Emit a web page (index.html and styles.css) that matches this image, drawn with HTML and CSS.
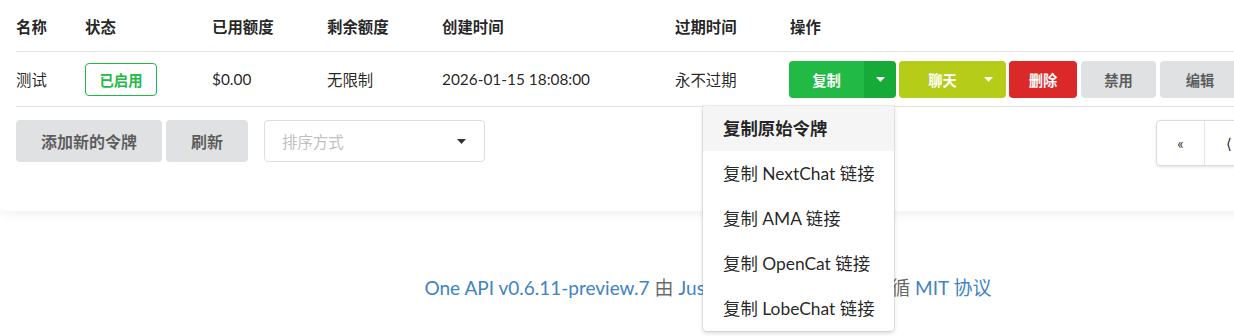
FILE: index.html
```html
<!DOCTYPE html>
<html>
<head>
<meta charset="utf-8">
<title>令牌</title>
<link rel="stylesheet" href="styles.css">
</head>
<body>
<div class="page">
	<div class="card">
		<table class="token-table">
			<colgroup>
				<col style="width:69px"><col style="width:127px"><col style="width:115px"><col style="width:115px"><col style="width:233px"><col style="width:115px"><col>
			</colgroup>
			<thead>
				<tr>
					<th>名称</th><th>状态</th><th>已用额度</th><th>剩余额度</th><th>创建时间</th><th>过期时间</th><th>操作</th>
				</tr>
			</thead>
			<tbody>
				<tr>
					<td>测试</td>
					<td><span class="label-green">已启用</span></td>
					<td>$0.00</td>
					<td>无限制</td>
					<td>2026-01-15 18:08:00</td>
					<td>永不过期</td>
					<td>
						<div class="actions">
							<div class="btn-group">
								<span class="btn btn-green btn-copy">复制</span>
								<span class="btn btn-green-dark btn-caret">
									<svg width="9" height="5" viewBox="0 0 9 5"><path d="M0 0h9L4.5 5z" fill="#fff"/></svg>
								</span>
							</div>
							<span class="btn btn-olive btn-chat">聊天
								<svg class="chat-caret" width="9" height="5" viewBox="0 0 9 5"><path d="M0 0h9L4.5 5z" fill="#fff"/></svg>
							</span>
							<span class="btn btn-red btn-del">删除</span>
							<span class="btn btn-grey btn-ban">禁用</span>
							<span class="btn btn-grey btn-edit">编辑</span>
						</div>
						<div class="copy-menu">
							<div class="copy-item active">复制原始令牌</div>
							<div class="copy-item">复制 NextChat 链接</div>
							<div class="copy-item">复制 AMA 链接</div>
							<div class="copy-item">复制 OpenCat 链接</div>
							<div class="copy-item">复制 LobeChat 链接</div>
						</div>
					</td>
				</tr>
			</tbody>
		</table>

		<div class="toolbar">
			<span class="btn btn-grey btn-big btn-add">添加新的令牌</span>
			<span class="btn btn-grey btn-big btn-refresh">刷新</span>
			<div class="sort-select">
				<span class="placeholder">排序方式</span>
				<svg width="9" height="5" viewBox="0 0 9 5"><path d="M0 0h9L4.5 5z" fill="#333"/></svg>
			</div>
			<div class="pager">
				<span class="pager-item">«</span>
				<span class="pager-item">⟨</span>
				<span class="pager-item active">1</span>
				<span class="pager-item">⟩</span>
				<span class="pager-item">»</span>
			</div>
		</div>
	</div>

	<div class="footer">
		<a href="#">One API v0.6.11-preview.7</a> 由 <a href="#">JustSong</a> 构建，源代码遵循 <a href="#">MIT 协议</a>
	</div>
</div>
</body>
</html>
```

FILE: styles.css
```css
html{overflow:hidden;}
html,body{margin:0;padding:0;background:#fff;}

body{
	font-family: Lato, "Noto Sans CJK SC", sans-serif;
	font-size: 15.4px;
	color: rgba(0,0,0,.87);
	min-height: 336px;
}

.page{width: 1416px;}

.card{
	background: #fff;
	border-radius: 0 0 5px 5px;
	box-shadow: 0 3px 12px rgba(0,0,0,.06);
	padding-bottom: 45px;
}

.token-table{
	width: calc(100% - 32px);
	margin: 0 16px;
	border-collapse: collapse;
	table-layout: fixed;
}
.token-table th{
	height: 51px;padding: 0;
	text-align: left;font-weight: 700;
	border-bottom: 1px solid #e3e3e3;
}
.token-table td{
	height: 54px;padding: 0;
	border-bottom: 1px solid #e3e3e3;
	position: relative;
}

.label-green{
	display: inline-flex;align-items: center;justify-content: center;
	width: 70px;height: 31px;
	border: 1px solid #21ba45;border-radius: 4px;
	color: #21ba45;font-weight: 700;font-size: 14.3px;
}

.actions{display: flex;gap: 3px;margin-left: -1px;}

.btn{
	display: inline-flex;align-items: center;justify-content: center;
	height: 37px;border-radius: 4px;
	font-size: 14.3px;font-weight: 700;
	color: #fff;box-sizing: border-box;
}
.btn-group{display: flex;}
.btn-copy{width: 75px;border-radius: 4px 0 0 4px;}
.btn-caret{width: 32px;border-radius: 0 4px 4px 0;}
.btn-green{background: #21ba45;}
.btn-green-dark{background: #16ab39;}
.btn-olive{background: #b5cc18;width: 107px;position: relative;padding-right: 20px;}
.chat-caret{position: absolute;right: 13px;top: 16px;}
.btn-red{background: #db2828;width: 68px;}
.btn-grey{background: #e0e1e2;color: rgba(0,0,0,.6);}
.btn-ban{width: 75px;margin-left: 1px;}
.btn-edit{width: 80px;margin-left: 1px;}

.copy-menu{
	position: absolute;left: -87px;top: 54px;z-index: 10;
	width: 191px;
	background: #fff;
	border-radius: 0 0 4px 4px;
	box-shadow: 0 2px 4px rgba(34,36,38,.18), 0 0 0 1px rgba(34,36,38,.08);
}
.copy-item{
	height: 45px;line-height: 45px;
	padding-left: 20px;
	font-size: 17.4px;color: rgba(0,0,0,.87);
	white-space: nowrap;
}
.copy-item.active{background: #f5f5f5;font-weight: 700;}

.toolbar{
	display: flex;align-items: flex-start;
	margin: 13px 19px 0 16px;
}
.btn-big{height: 42px;font-size: 16px;}
.btn-add{width: 146px;}
.btn-refresh{width: 82px;margin-left: 4px;}

.sort-select{
	display: flex;align-items: center;justify-content: space-between;
	width: 221px;height: 42px;box-sizing: border-box;
	margin-left: 16px;padding: 0 18px 0 17px;
	border: 1px solid #dedede;border-radius: 4px;
}
.placeholder{color: #bfbfbf;font-size: 15.4px;}

.pager{
	display: flex;margin-left: auto;
	height: 46px;box-sizing: border-box;
	border: 1px solid #dcdcdc;border-radius: 4px;
	box-shadow: 0 1px 3px rgba(0,0,0,.12);
}
.pager-item{
	width: 47px;display: flex;align-items: center;justify-content: center;
	border-right: 1px solid #e3e3e3;font-size: 15px;
}
.pager-item:last-child{border-right: none;}
.pager-item.active{background: #f2f2f2;}

.footer{
	text-align: center;
	margin-top: 62px;
	font-size: 19px;color: rgba(0,0,0,.6);
}
.footer a{color: #4183c4;text-decoration: none;}
```
